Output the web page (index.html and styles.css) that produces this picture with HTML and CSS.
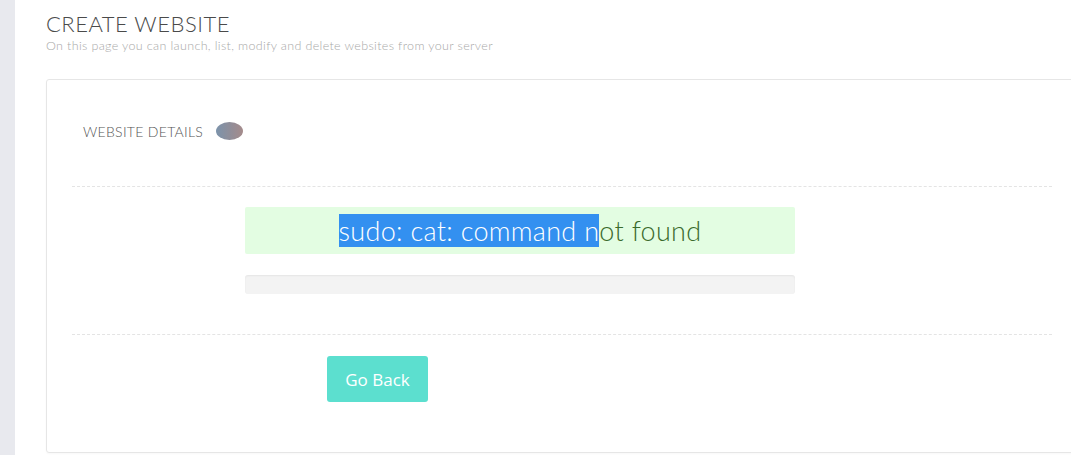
FILE: index.html
```html
<!DOCTYPE html>
<html lang="en">
<head>
  <meta charset="UTF-8">
  <meta name="viewport" content="width=device-width, initial-scale=1.0">
  <title>Create Website</title>
  <link rel="stylesheet" href="styles.css">
</head>
<body>

<div id="sidebar"></div>

<div id="content">
  <div class="page-head">
    <h1>CREATE WEBSITE</h1>
    <p>On this page you can launch, list, modify and delete websites from your server</p>
  </div>

  <div class="panel">
    <div class="panel-body">
      <div class="panel-title">
        <span>WEBSITE DETAILS</span>
        <span class="loader"></span>
      </div>

      <div class="section">
        <div class="alert"><span class="selected">sudo: cat: command n</span>ot found</div>
        <div class="progress"></div>
      </div>

      <div class="actions">
        <button class="btn-back">Go Back</button>
      </div>
    </div>
  </div>
</div>

</body>
</html>
```

FILE: styles.css
```css
html, body {
  height: 100%;
}

body {
  margin: 0;
  display: flex;
  background-color: #fff;
  font-family: 'Lato', 'Open Sans', sans-serif;
  overflow: hidden;
}

#sidebar {
  width: 15px;
  flex-shrink: 0;
  background-color: #e8e9ee;
}

#content {
  padding: 0 0 0 31px;
}

.page-head h1 {
  margin: 0;
  padding-top: 11px;
  font-size: 22px;
  font-weight: 300;
  line-height: 26px;
  color: #4a4a4a;
  letter-spacing: 0.5px;
}

.page-head p {
  margin: 1px 0 0;
  font-size: 12.5px;
  line-height: 16px;
  font-weight: 300;
  letter-spacing: 0.35px;
  color: #a8a8a8;
}

.panel {
  width: 1040px;
  height: 372px;
  margin-top: 25px;
  border: 1px solid #e6e6e6;
  border-radius: 3px;
  box-shadow: 0 1px 2px rgba(0, 0, 0, 0.03);
}

.panel-body {
  width: 980px;
  margin-left: 25px;
}

.panel-title {
  display: flex;
  align-items: center;
  gap: 13px;
  height: 102px;
  padding: 0 0 4px 11px;
  border-bottom: 1px dashed #e4e4e4;
  font-size: 14px;
  font-weight: 300;
  letter-spacing: 0.3px;
  color: #555;
}

.loader {
  width: 27px;
  height: 18px;
  border-radius: 50%;
  background: linear-gradient(to right, #7c93ab, #8f8e9a 50%, #a58b8b);
}

.section {
  padding: 20px 0 40px 173px;
  border-bottom: 1px dashed #e4e4e4;
}

.alert {
  width: 550px;
  height: 47px;
  line-height: 47px;
  border-radius: 2px;
  background-color: #e3fde2;
  color: #3a6a2c;
  font-size: 27px;
  font-weight: 300;
  letter-spacing: 0.3px;
  text-align: center;
}

.selected {
  background-color: #3390f0;
  color: #fff;
}

.progress {
  width: 550px;
  height: 19px;
  margin-top: 21px;
  border-radius: 3px;
  background-color: #f3f3f3;
  box-shadow: inset 0 1px 2px rgba(0, 0, 0, 0.06);
}

.actions {
  padding: 21px 0 0 255px;
}

.btn-back {
  width: 101px;
  height: 46px;
  border: none;
  border-radius: 3px;
  background-color: #5cdfcf;
  color: #fff;
  font-family: 'Open Sans', sans-serif;
  font-size: 17px;
  cursor: pointer;
}
```
